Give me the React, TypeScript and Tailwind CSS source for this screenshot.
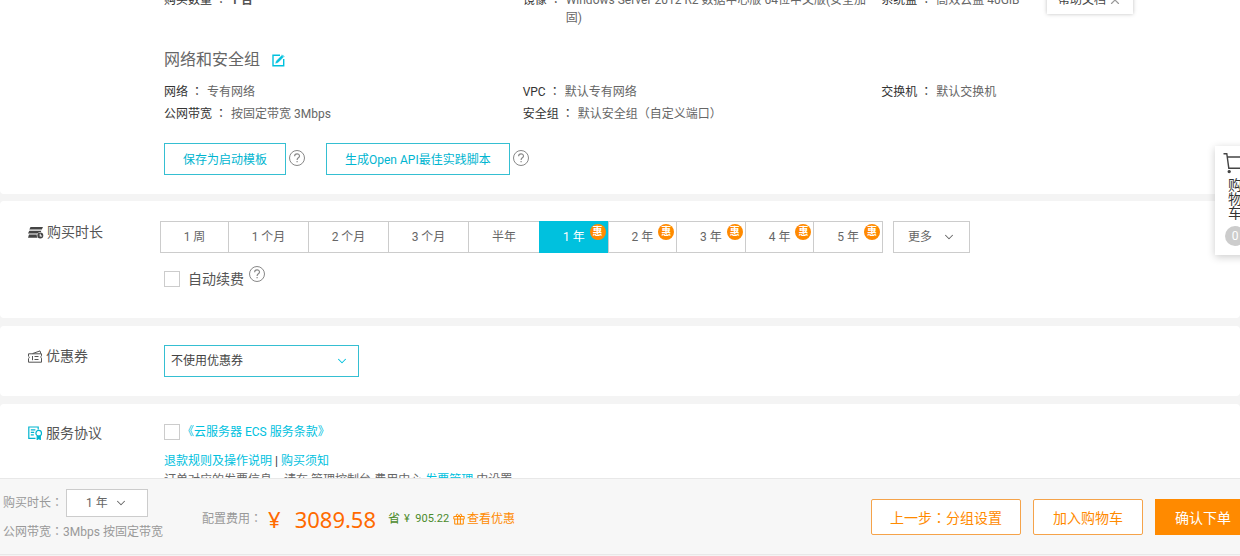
import { useState } from "react";
import type { ReactNode } from "react";
import { ChevronDown, X } from "lucide-react";
import clsx from "clsx";

const instanceItems = [
  { label: "购买数量", value: "1 台", strong: true },
  { label: "镜像", value: "Windows Server 2012 R2 数据中心版 64位中文版(安全加固)" },
  { label: "系统盘", value: "高效云盘 40GiB" },
];

const networkItems = [
  { label: "网络", value: "专有网络" },
  { label: "VPC", value: "默认专有网络" },
  { label: "交换机", value: "默认交换机" },
  { label: "公网带宽", value: "按固定带宽 3Mbps" },
  { label: "安全组", value: "默认安全组（自定义端口）" },
];

const durations = [
  { label: "1 周", width: "w-[68px]" },
  { label: "1 个月", width: "w-20" },
  { label: "2 个月", width: "w-20" },
  { label: "3 个月", width: "w-20" },
  { label: "半年", width: "w-[71px]" },
  { label: "1 年", width: "flex-1", discount: true },
  { label: "2 年", width: "flex-1", discount: true },
  { label: "3 年", width: "flex-1", discount: true },
  { label: "4 年", width: "flex-1", discount: true },
  { label: "5 年", width: "flex-1", discount: true },
];

export default function App() {
  const [duration, setDuration] = useState("1 年");

  return (
    <div className="relative flex h-screen flex-col overflow-hidden bg-[#f4f4f4] font-['Roboto','Noto_Sans_CJK_SC',sans-serif] text-xs text-[#666]">
      <main className="min-h-0 flex-1 overflow-hidden">
        {/* Configuration summary, partly scrolled out of view */}
        <section className="-mt-[9px] mb-[7px] rounded-sm bg-white pb-[19px] pl-[164px]">
          <div className="grid grid-cols-3">
            {instanceItems.map((item) => (
              <SummaryItem key={item.label} {...item} />
            ))}
          </div>
          <div className="mt-[21px] flex items-center gap-3">
            <h2 className="text-base leading-6">网络和安全组</h2>
            <button aria-label="编辑" className="text-[#00c1de]">
              <EditIcon />
            </button>
          </div>
          <div className="mt-[11px] grid grid-cols-3 gap-y-1">
            {networkItems.map((item) => (
              <SummaryItem key={item.label} {...item} />
            ))}
          </div>
          <div className="mt-5 flex">
            <OutlineButton>保存为启动模板</OutlineButton>
            <HelpIcon className="mt-1.5 mr-5 ml-0.5" />
            <OutlineButton>生成Open API最佳实践脚本</OutlineButton>
            <HelpIcon className="mt-1.5 ml-0.5" />
          </div>
        </section>

        {/* Duration */}
        <Section icon={<DurationIcon />} title="购买时长" className="pt-5 pb-[29px]">
          <div className="-ml-1 flex gap-2.5">
            <div className="flex h-8 w-[723px] border-r border-[#ccc]">
              {durations.map((item) => {
                const active = item.label === duration;
                return (
                  <button
                    key={item.label}
                    onClick={() => setDuration(item.label)}
                    className={clsx(
                      "relative border-y border-l",
                      item.width,
                      active ? "border-[#00c1de] bg-[#00c1de] text-white" : "border-[#ccc] bg-white"
                    )}
                  >
                    {item.label}
                    {item.discount && (
                      <span className="absolute top-0.5 right-0.5 flex size-4 items-center justify-center rounded-full bg-[#ff8a00] text-[10px] leading-4 font-bold text-white">
                        惠
                      </span>
                    )}
                  </button>
                );
              })}
            </div>
            <Dropdown label="更多时长" options={["更多"]} className="h-8 w-[77px] border-[#ccc] pl-3.5" iconClass="right-3.5" />
          </div>
          <div className="mt-3 flex items-start">
            <label className="mt-1 flex items-center gap-2 text-sm leading-5 text-[#555]">
              <Checkbox />
              自动续费
            </label>
            <HelpIcon className="ml-1" />
          </div>
        </Section>

        {/* Coupon */}
        <Section icon={<CouponIcon />} title="优惠券" className="pt-[19px] pb-[19px]">
          <Dropdown
            label="优惠券"
            options={["不使用优惠券"]}
            className="h-8 w-[195px] border-[#35bfd2] pl-1.5 text-[#444]"
            iconClass="right-2.5 text-[#00c1de]"
          />
        </Section>

        {/* Agreement */}
        <Section icon={<AgreementIcon />} title="服务协议" className="pt-[18px] pb-5">
          <div className="flex items-center gap-0.5">
            <Checkbox id="terms" />
            <label htmlFor="terms" className="sr-only">
              同意
            </label>
            <a href="#terms" className="leading-5 text-[#00c1de]">
              《云服务器 ECS 服务条款》
            </a>
          </div>
          <p className="mt-2.5 leading-[18px] text-[#333]">
            <a href="#refund" className="text-[#00c1de]">退款规则及操作说明</a>
            {" | "}
            <a href="#notice" className="text-[#00c1de]">购买须知</a>
          </p>
          <p className="leading-[20px]">
            订单对应的发票信息，请在 管理控制台-费用中心{" "}
            <a href="#invoice" className="text-[#00c1de]">发票管理</a> 中设置
          </p>
        </Section>
      </main>

      {/* Order bar */}
      <footer className="mb-px flex shrink-0 items-center border-y border-[#e8e8e8] bg-[#f7f7f7] pt-2.5 pb-[13px] pl-[3px] whitespace-nowrap text-[#999]">
        <div className="w-[199px]">
          <div className="flex items-center">
            <span className="mr-[3px]">购买时长<Colon /></span>
            <Dropdown label="购买时长" options={["1 年"]} className="h-7 w-[82px] border-[#ccc] pl-[19px] text-[#666]" iconClass="right-5 text-[#666]" />
          </div>
          <div className="mt-1.5 leading-[18px]">公网带宽<Colon />3Mbps 按固定带宽</div>
        </div>
        <div className="mt-2 flex items-center">
          <span>配置费用<Colon /></span>
          <span className="ml-1.5 flex gap-3.5 font-['Noto_Sans',sans-serif] text-[22px] leading-8 text-[#ff6a00]">
            <span>¥</span>
            <span>3089.58</span>
          </span>
          <span className="ml-3 text-[#4b8b2b]">省</span>
          <span className="ml-1 text-[11px] text-[#4b8b2b]">¥&nbsp; 905.22</span>
          <a href="#offers" className="ml-1 flex items-center gap-0.5 text-[#ff8a00]">
            <GiftIcon />
            查看优惠
          </a>
        </div>
        <div className="mt-1 -mr-[11px] ml-auto flex gap-3 text-sm">
          <button className="h-9 rounded-xs border border-[#f5a34a] bg-white px-[18px] pt-0.5 text-[#ff8a00]">
            上一步<Colon />分组设置
          </button>
          <button className="h-9 rounded-xs border border-[#f5a34a] bg-white px-[19px] pt-0.5 text-[#ff8a00]">
            加入购物车
          </button>
          <button className="h-9 bg-[#ff8a00] px-5 pt-0.5 text-white">确认下单</button>
        </div>
      </footer>

      {/* Floating helpers */}
      <div className="absolute -top-3.5 right-[107px] flex h-7 w-[86px] items-center justify-center gap-0.5 bg-white text-[#444] shadow-[0_0_4px_rgba(0,0,0,0.25)]">
        帮助文档
        <button aria-label="关闭" className="text-[#999]">
          <X className="size-3.5" />
        </button>
      </div>
      <button className="absolute top-[146px] -right-[15px] flex h-[109px] w-10 flex-col items-center bg-white pt-1.5 text-sm leading-[14px] text-[#333] shadow-[0_2px_8px_rgba(0,0,0,0.2)]">
        <CartIcon />
        <span className="mt-1 w-3.5">购物车</span>
        <span className="mt-1.5 flex size-5 items-center justify-center rounded-full bg-[#ccc] text-xs text-white">
          0
        </span>
      </button>
    </div>
  );
}

// The TC face centres the full-width colon in its box
function Colon() {
  return <span className="font-['Noto_Sans_CJK_TC',sans-serif] leading-none">：</span>;
}

function SummaryItem({ label, value, strong }: { label: string; value: string; strong?: boolean }) {
  return (
    <div className="flex pr-2 leading-[18px]">
      <span className="mr-1 shrink-0 text-[#333]">
        {label} <Colon />
      </span>
      <span className={clsx(strong && "font-bold text-[#555]")}>{value}</span>
    </div>
  );
}

function Section({
  icon,
  title,
  className,
  children,
}: {
  icon: ReactNode;
  title: string;
  className?: string;
  children: ReactNode;
}) {
  return (
    <section className={clsx("mb-2 flex rounded-sm bg-white pl-7", className)}>
      <h2 className="flex h-[22px] w-[136px] shrink-0 items-center gap-[3px] text-sm text-[#555]">
        {icon}
        {title}
      </h2>
      <div className="min-w-0 flex-1">{children}</div>
    </section>
  );
}

function OutlineButton({ children }: { children: ReactNode }) {
  return (
    <button className="h-8 border border-[#35bfd2] bg-white px-[18px] pt-0.5 text-[#00b5d0]">{children}</button>
  );
}

function Checkbox({ id }: { id?: string }) {
  return (
    <input
      id={id}
      type="checkbox"
      className="size-4 appearance-none border border-[#ccc] bg-white checked:bg-[#00c1de]"
    />
  );
}

function Dropdown({
  label,
  options,
  className,
  iconClass,
}: {
  label: string;
  options: string[];
  className: string;
  iconClass: string;
}) {
  return (
    <div className="relative flex w-fit">
      <select aria-label={label} className={clsx("appearance-none border bg-white", className)}>
        {options.map((option) => (
          <option key={option}>{option}</option>
        ))}
      </select>
      <ChevronDown
        strokeWidth={1.8}
        className={clsx("pointer-events-none absolute top-1/2 size-3.5 -translate-y-1/2", iconClass)}
      />
    </div>
  );
}

function HelpIcon({ className }: { className?: string }) {
  return (
    <button aria-label="帮助" className={clsx("size-[18px] text-[#888]", className)}>
      <svg viewBox="0 0 18 18" className="size-[18px]" fill="none" stroke="currentColor">
        <circle cx="9" cy="9" r="7.5" />
        <path d="M6.6 7.2c0-3.2 4.9-3.1 4.9-.2 0 1.9-2.4 1.8-2.4 3.9M9.1 12v1.3" strokeWidth="1.2" />
      </svg>
    </button>
  );
}

function EditIcon() {
  return (
    <svg viewBox="0 0 13 13" className="size-[13px]" fill="none" stroke="currentColor">
      <path d="M8 1.3H1v10.4h10.7V5" strokeWidth="1.4" />
      <path d="M3.6 9.3l.8-2.4L9.8 1.5l1.6 1.6L6 8.5z" fill="currentColor" strokeWidth=".4" />
      <path d="M10.2.8l2 2" />
    </svg>
  );
}

function DurationIcon() {
  return (
    <svg viewBox="0 0 16 13" className="h-[13px] w-4" fill="#444">
      <path d="M2.5 1H15l-1.2 2.6H1.3zM1.3 4.7h12l-.4 1.2c-1.6-.1-2.8.6-3.5 1.6H0zM1 8.6h7.8c-.2 1.4.1 2.3.8 3.2H0z" />
      <path fillRule="evenodd" d="M12.3 6.6a3 3 0 100 6 3 3 0 000-6zM11.7 7.8h1v1.8h1.4v.9h-2.4z" />
    </svg>
  );
}

function CouponIcon() {
  return (
    <svg viewBox="0 0 15 13" className="h-[13px] w-[15px]" fill="none" stroke="#555">
      <path d="M.5 3.8h13v2c-1 .4-1 2 0 2.4v4H.5v-3.6c1-.4 1-2 0-2.4zM4.5 3.6L12 .9l.8 2.7" />
      <path d="M4.5 6v4.2M6.5 6.5h4M6.5 9.5h4" />
    </svg>
  );
}

function AgreementIcon() {
  return (
    <svg viewBox="0 0 15 14" className="h-3.5 w-[15px]" fill="none" stroke="#00b5d0" strokeWidth="1.2">
      <path d="M7.5 12.4H.8V1h9.4v2.6M2.8 3.8h4.6M2.8 6.3h3.4M2.8 8.8h3" />
      <circle cx="10.7" cy="7.2" r="2.8" />
      <path d="M9.2 9.8v3.6l1.5-1 1.6 1V9.8" fill="#00b5d0" />
    </svg>
  );
}

function GiftIcon() {
  return (
    <svg viewBox="0 0 12 12" className="size-3" fill="none" stroke="currentColor">
      <path d="M.8 3.5h10.4v2.6H.8zM1.7 6.1v5h8.6v-5M4.6 3.5v7.6M7.4 3.5v7.6M6 3.3C5 .2 2.6.8 3.4 3.3M6 3.3C7 .2 9.4.8 8.6 3.3" />
    </svg>
  );
}

function CartIcon() {
  return (
    <svg viewBox="0 0 24 22" className="h-[22px] w-6 shrink-0" fill="none" stroke="#444" strokeWidth="1.4">
      <path d="M.5 1.7h3.3l2 14.5h14.5M4.5 5h18l-1.8 8.5" />
      <circle cx="6.2" cy="19.6" r="1" fill="#444" />
      <circle cx="19" cy="19.6" r="1" fill="#444" />
    </svg>
  );
}
